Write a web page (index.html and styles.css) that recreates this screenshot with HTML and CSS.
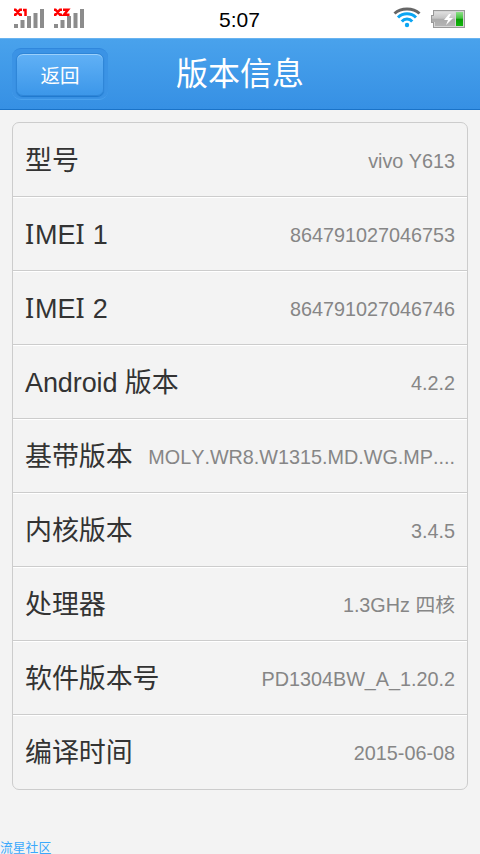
FILE: index.html
```html
<!DOCTYPE html>
<html lang="zh-CN">
<head>
  <meta charset="UTF-8">
  <meta name="viewport" content="width=device-width, initial-scale=1.0">
  <title>版本信息</title>
  <link rel="stylesheet" href="styles.css">
</head>
<body>
  <div class="statusbar">
    <div class="signals">
      <svg class="signal" width="31" height="22" viewBox="0 0 31 22">
        <path fill="#8c8c8c" d="M0 16h4v4H0zM6.500 12h4v8h-4zM13 8h4v12h-4zM19.500 5h4v15h-4zM26 1h4v19h-4z"/>
        <path fill="none" stroke="#f00" stroke-width="2.500" d="M0 1.700h1.500l4.500 5h2M0 6.700h1.500l4.500-5h2M9 2h2.500V8"/>
      </svg>
      <svg class="signal" width="31" height="22" viewBox="0 0 31 22">
        <path fill="#8c8c8c" d="M0 16h4v4H0zM6.500 12h4v8h-4zM13 8h4v12h-4zM19.500 5h4v15h-4zM26 1h4v19h-4z"/>
        <path fill="none" stroke="#f00" stroke-width="2.500" d="M0 1.700h1.500l4.500 5h2M0 6.700h1.500l4.500-5h2M9 1.700h5l-4 5h5.500"/>
      </svg>
    </div>
    <div class="time">5:07</div>
    <div class="status-right">
      <svg width="28" height="22" viewBox="0 0 28 22">
        <g fill="none" stroke-width="3">
          <path stroke="#666" d="M1.500 6.500C8 .5 20 .5 26.500 6.500"/>
          <g stroke="#0ba5f2">
            <path d="M5 10.500C10 5.500 18 5.500 23 10.500"/>
            <path d="M8.800 14.500C11.500 11.300 16.500 11.300 19.200 14.500"/>
          </g>
        </g>
        <circle cx="14" cy="18" r="2.200" fill="#0ba5f2"/>
      </svg>
      <svg width="34" height="18" viewBox="0 0 34 18">
        <defs>
          <linearGradient id="case" x2="0" y2="1">
            <stop offset="0" stop-color="#dedede"/>
            <stop offset=".45" stop-color="#c4c4c4"/>
            <stop offset=".5" stop-color="#aaa"/>
            <stop offset="1" stop-color="#b4b4b4"/>
          </linearGradient>
          <linearGradient id="charge" x2="0" y2="1">
            <stop offset="0" stop-color="#8fe08a"/>
            <stop offset=".45" stop-color="#42c23c"/>
            <stop offset=".5" stop-color="#0a9c05"/>
            <stop offset="1" stop-color="#12b80c"/>
          </linearGradient>
        </defs>
        <path fill="#999" d="M0 5h3v8H0zM2 0h32v18H2z"/>
        <path fill="#d5d5d5" d="M3 1h30v16H3z"/>
        <path fill="url(#case)" d="M1 6h3v6H1zM4 2h20v14H4z"/>
        <path fill="url(#charge)" d="M25 2h7v14h-7z"/>
        <path fill="#fff" d="M18 4l-5 6h4l-2 5 7-7h-4l2-4z"/>
      </svg>
    </div>
  </div>

  <div class="header">
    <div class="back-frame"><button class="back">返回</button></div>
    <h1>版本信息</h1>
  </div>

  <ul class="list">
    <li><span class="name">型号</span><span class="value">vivo Y613</span></li>
    <li><span class="name"><span class="cap">I</span>ME<span class="cap">I</span> 1</span><span class="value">864791027046753</span></li>
    <li><span class="name"><span class="cap">I</span>ME<span class="cap">I</span> 2</span><span class="value">864791027046746</span></li>
    <li><span class="name">Android 版本</span><span class="value">4.2.2</span></li>
    <li><span class="name">基带版本</span><span class="value">MOLY.WR8.W1315.MD.WG.MP....</span></li>
    <li><span class="name">内核版本</span><span class="value">3.4.5</span></li>
    <li><span class="name">处理器</span><span class="value">1.3GHz 四核</span></li>
    <li><span class="name">软件版本号</span><span class="value">PD1304BW_A_1.20.2</span></li>
    <li><span class="name">编译时间</span><span class="value">2015-06-08</span></li>
  </ul>

  <div class="footer">流星社区</div>
</body>
</html>
```
FILE: styles.css
```css
* {
  box-sizing: border-box;
}
body {
  margin: 0;
  height: 854px;
  display: flex;
  flex-direction: column;
  overflow: hidden;
  background: #f3f3f3;
  color: #333;
  font-family: "Liberation Sans", "Noto Sans CJK SC", sans-serif;
}

/* status bar */
.statusbar {
  height: 38px;
  display: grid;
  grid-template-columns: 1fr auto 1fr;
  padding: 0 15px 0 14px;
  background: #fff;
}
.signals {
  display: flex;
  gap: 9px;
  padding-top: 8px;
}
.time {
  font-size: 21px;
  line-height: 40px;
  color: #000;
}
.status-right {
  display: flex;
  justify-content: flex-end;
  gap: 10px;
  padding-top: 7px;
}
.status-right svg + svg {
  margin-top: 3px;
}

/* title bar */
.header {
  height: 72px;
  display: grid;
  grid-template-columns: 96px 1fr 96px;
  padding: 10px 12px 0;
  background: linear-gradient(#49a2ec, #3690e4);
  border-top: 1px solid #68b3f0;
  border-bottom: 1px solid #1a73c8;
}
.back-frame {
  height: 52px;
  margin-top: -1px;
  padding: 4px;
  border-radius: 9px;
  background: #3b93e5;
  border-top: 1px solid #3087dc;
  border-bottom: 1px solid #4aa2ee;
}
.back {
  display: block;
  width: 88px;
  height: 43px;
  padding: 0;
  border: 1px solid #2f86d8;
  border-radius: 7px;
  background: linear-gradient(#61b1f6, #3c97e9);
  box-shadow: inset 0 1px 0 #9bd0fb, 0 1px 1px #1e78cc;
  color: #fff;
  font-family: "Noto Sans CJK SC", sans-serif;
  font-size: 19.500px;
  font-weight: 400;
  line-height: 38px;
}
h1 {
  margin: 0;
  text-align: center;
  color: #fff;
  font-size: 32px;
  font-weight: 400;
  line-height: 50px;
}

/* info rows */
.list {
  margin: 12px 12px 0;
  padding: 0;
  list-style: none;
  border: 1px solid #ccc;
  border-radius: 7px;
}
.list li {
  height: 74px;
  display: flex;
  align-items: center;
  justify-content: space-between;
  padding: 2px 12px 0;
  border-bottom: 1px solid #ccc;
  white-space: nowrap;
}
.list li + li {
  box-shadow: inset 0 1px 0 #fff;
}
.list li:last-child {
  border-bottom: none;
}
.name {
  font-size: 27px;
  line-height: 40px;
  letter-spacing: -0.1px;
}
.cap {
  padding-right: 1px;
  font-family: "Noto Sans", sans-serif;
}
.value {
  font-size: 19.800px;
  line-height: 30px;
  font-kerning: none;
  color: #868686;
}

.footer {
  margin-top: auto;
  color: #3ba9fc;
  font-size: 12.800px;
  line-height: 12px;
}
```
